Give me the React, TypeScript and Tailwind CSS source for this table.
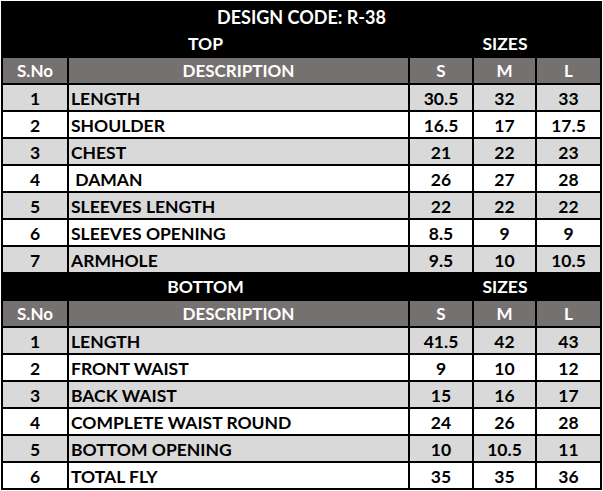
import React from "react";

type Row = [string, string, string, string, string];

const topRows: Row[] = [
  ["1", "LENGTH", "30.5", "32", "33"],
  ["2", "SHOULDER", "16.5", "17", "17.5"],
  ["3", "CHEST", "21", "22", "23"],
  ["4", "\u00a0DAMAN", "26", "27", "28"],
  ["5", "SLEEVES LENGTH", "22", "22", "22"],
  ["6", "SLEEVES OPENING", "8.5", "9", "9"],
  ["7", "ARMHOLE", "9.5", "10", "10.5"],
];

const bottomRows: Row[] = [
  ["1", "LENGTH", "41.5", "42", "43"],
  ["2", "FRONT WAIST", "9", "10", "12"],
  ["3", "BACK WAIST", "15", "16", "17"],
  ["4", "COMPLETE WAIST ROUND", "24", "26", "28"],
  ["5", "BOTTOM OPENING", "10", "10.5", "11"],
  ["6", "TOTAL FLY", "35", "35", "36"],
];

const SectionHead = ({ title }: { title: string }) => (
  <>
    <div className="flex h-[27px] border-t-2 border-black bg-black text-[17.5px] text-white">
      <div className="flex w-[405px] items-center justify-center">{title}</div>
      <div className="flex flex-1 items-center justify-center border-l-2 border-black">SIZES</div>
    </div>
    <div className="flex h-[27px] border-t-2 border-black bg-[#767171] text-white">
      <div className="flex w-[64px] items-center justify-center">S.No</div>
      <div className="flex w-[341px] items-center justify-center border-l-2 border-black">DESCRIPTION</div>
      <div className="flex w-[64px] items-center justify-center border-l-2 border-black">S</div>
      <div className="flex w-[63px] items-center justify-center border-l-2 border-black">M</div>
      <div className="flex flex-1 items-center justify-center border-l-2 border-black">L</div>
    </div>
  </>
);

const DataRow = ({ row, idx }: { row: Row; idx: number }) => (
  <div
    className={`flex h-[27px] border-t-2 border-black text-[17.5px] text-black ${
      idx % 2 === 0 ? "bg-[#d9d9d9]" : "bg-white"
    }`}
  >
    <div className="flex w-[64px] items-center justify-center pt-[2px]">{row[0]}</div>
    <div className="flex w-[341px] items-center border-l-2 border-black pl-[2px] pt-[2px]">{row[1]}</div>
    <div className="flex w-[64px] items-center justify-center border-l-2 border-black pt-[2px]">{row[2]}</div>
    <div className="flex w-[63px] items-center justify-center border-l-2 border-black pt-[2px]">{row[3]}</div>
    <div className="flex flex-1 items-center justify-center border-l-2 border-black pt-[2px]">{row[4]}</div>
  </div>
);

export default function App() {
  return (
    <div className="min-h-screen bg-white pt-[1px] pl-[1px]">
      <div
        className="w-[601px] border-2 border-black text-[17px] font-bold leading-none"
        style={{ fontFamily: "Lato, 'Open Sans', sans-serif" }}
      >
        <div className="flex h-[27px] items-center justify-center bg-black text-[18px] text-white">
          DESIGN CODE: R-38
        </div>
        <div className="h-px bg-white" />
        <div className="-mt-[2px]">
          <SectionHead title="TOP" />
        </div>
        {topRows.map((r, i) => (
          <DataRow key={`t${i}`} row={r} idx={i} />
        ))}
        <SectionHead title="BOTTOM" />
        {bottomRows.map((r, i) => (
          <DataRow key={`b${i}`} row={r} idx={i} />
        ))}
      </div>
    </div>
  );
}
